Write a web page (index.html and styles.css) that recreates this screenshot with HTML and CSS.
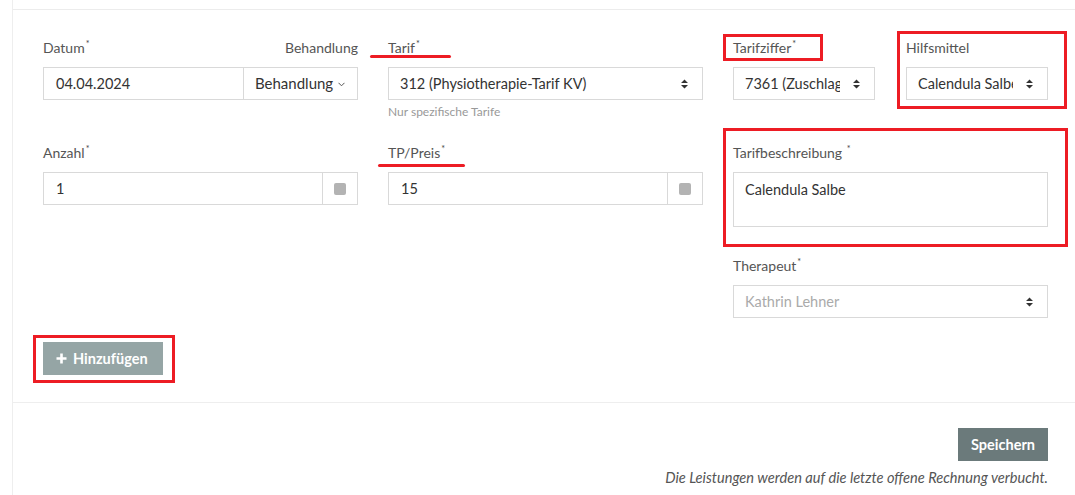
FILE: index.html
```html
<!DOCTYPE html>
<html lang="de">
<head>
<meta charset="utf-8">
<title>Leistungen</title>
<link rel="stylesheet" href="styles.css">
</head>
<body>
<div class="page">
  <div class="panel">
    <div class="sep-top"></div>
    <div class="form">
      <div class="grid">
        <div class="group">
          <div class="label-row">
            <span class="label">Datum<span class="req">*</span></span>
            <span class="label">Behandlung</span>
          </div>
          <div class="input-group">
            <div class="control grow">04.04.2024</div>
            <div class="addon-dd">Behandlung
              <svg class="chev" width="7" height="5" viewBox="0 0 7 5"><path d="M0.5 0.8 L3.5 3.8 L6.5 0.8" fill="none" stroke="#555" stroke-width="1"/></svg>
            </div>
          </div>
        </div>

        <div class="group">
          <div class="label-row"><span class="label">Tarif<span class="req">*</span></span></div>
          <div class="control select"><span class="val">312 (Physiotherapie-Tarif KV)</span>
            <svg class="sort" width="7" height="10" viewBox="0 0 7 10"><path d="M0 4 L3.5 0.5 L7 4 Z M0 6 L3.5 9.5 L7 6 Z" fill="#333"/></svg>
          </div>
          <div class="help">Nur spezifische Tarife</div>
        </div>

        <div class="group sub">
          <div>
            <div class="label-row"><span class="label">Tarifziffer<span class="req">*</span></span></div>
            <div class="control select"><span class="val">7361 (Zuschlag</span>
              <svg class="sort" width="7" height="10" viewBox="0 0 7 10"><path d="M0 4 L3.5 0.5 L7 4 Z M0 6 L3.5 9.5 L7 6 Z" fill="#333"/></svg>
            </div>
          </div>
          <div>
            <div class="label-row"><span class="label">Hilfsmittel</span></div>
            <div class="control select"><span class="val">Calendula Salbe</span>
              <svg class="sort" width="7" height="10" viewBox="0 0 7 10"><path d="M0 4 L3.5 0.5 L7 4 Z M0 6 L3.5 9.5 L7 6 Z" fill="#333"/></svg>
            </div>
          </div>
        </div>

        <div class="group">
          <div class="label-row"><span class="label">Anzahl<span class="req">*</span></span></div>
          <div class="input-group">
            <div class="control grow">1</div>
            <div class="addon-sq"><span class="sq"></span></div>
          </div>
        </div>

        <div class="group">
          <div class="label-row"><span class="label">TP/Preis<span class="req">*</span></span></div>
          <div class="input-group">
            <div class="control grow">15</div>
            <div class="addon-sq"><span class="sq"></span></div>
          </div>
        </div>

        <div class="group">
          <div class="label-row"><span class="label">Tarifbeschreibung <span class="req">*</span></span></div>
          <div class="control textarea">Calendula Salbe</div>
        </div>

        <div class="group col3">
          <div class="label-row"><span class="label">Therapeut<span class="req">*</span></span></div>
          <div class="control select placeholder"><span class="val">Kathrin Lehner</span>
            <svg class="sort" width="7" height="10" viewBox="0 0 7 10"><path d="M0 4 L3.5 0.5 L7 4 Z M0 6 L3.5 9.5 L7 6 Z" fill="#333"/></svg>
          </div>
        </div>
      </div>

      <div class="add-row">
        <button class="btn btn-add" type="button">
          <svg width="11" height="11" viewBox="0 0 11 11"><path d="M5.5 0.5 V10.5 M0.5 5.5 H10.5" stroke="#fff" stroke-width="2.6"/></svg>
          Hinzufügen
        </button>
      </div>
    </div>

    <div class="footer">
      <button class="btn btn-save" type="button">Speichern</button>
      <p class="note">Die Leistungen werden auf die letzte offene Rechnung verbucht.</p>
    </div>
  </div>

  <div class="mark box-ziffer"></div>
  <div class="mark box-hilfs"></div>
  <div class="mark box-beschr"></div>
  <div class="mark box-add"></div>
  <div class="line line-tarif"></div>
  <div class="line line-tp"></div>
</div>
</body>
</html>
```

FILE: styles.css
```css
* { box-sizing: border-box; }
html, body { margin: 0; padding: 0; background: #fff; }
body {
  font-family: Lato, "Open Sans", "Liberation Sans", sans-serif;
  color: #333;
  font-size: 14px;
}
.page { position: relative; width: 1075px; height: 495px; overflow: hidden; }
.panel {
  margin-left: 12px;
  border-left: 1px solid #eeeeee;
  height: 495px;
  padding-top: 9px;
}
.sep-top { border-top: 1px solid #ececec; }
.form { padding: 28px 27px 0 30px; }
.grid {
  display: grid;
  grid-template-columns: 315px 315px 315px;
  grid-template-rows: 105px 113px auto;
  column-gap: 30px;
  align-items: start;
}
.col3 { grid-column: 3; }
.sub {
  display: grid;
  grid-template-columns: 142px 142px;
  column-gap: 31px;
}
.label-row {
  display: flex;
  justify-content: space-between;
  height: 20px;
  line-height: 20px;
  margin-bottom: 9px;
}
.label { font-size: 14px; color: #555; }
.req { font-size: 9px; vertical-align: top; line-height: 12px; margin-left: 1px; color: #444; }
.control {
  height: 33px;
  border: 1px solid #d9d9d9;
  padding: 0 12px;
  line-height: 31px;
  font-size: 14.5px;
  color: #333;
  background: #fff;
  white-space: nowrap;
  overflow: hidden;
}
.input-group { display: flex; }
.grow { flex: 1; }
.addon-dd {
  border: 1px solid #d9d9d9;
  border-left: none;
  height: 33px;
  width: 114px;
  line-height: 31px;
  padding-left: 11px;
  font-size: 15px;
  color: #333;
  white-space: nowrap;
}
.chev { margin-left: 1px; vertical-align: 2px; }
.addon-sq {
  width: 35px;
  height: 33px;
  border: 1px solid #d9d9d9;
  border-left: none;
  display: flex;
  align-items: center;
  justify-content: center;
}
.sq { width: 12px; height: 12px; background: #b3b3b3; border-radius: 2px; }
.select {
  position: relative;
  padding-right: 34px;
  padding-left: 11px;
}
.select .val { display: block; overflow: hidden; }
.sort { position: absolute; right: 14px; top: 11px; }
.placeholder { color: #aaa; }
.help { font-size: 12px; color: #999; margin-top: 4px; line-height: 15px; }
.textarea { height: 55px; line-height: 20px; padding-top: 7px; padding-left: 11px; }

.add-row { margin-top: 24px; padding-bottom: 27px; border-bottom: 1px solid #eeeeee; margin-left: -30px; margin-right: -27px; padding-left: 30px; }
.btn {
  border: none;
  height: 33px;
  font-family: Lato, "Open Sans", "Liberation Sans", sans-serif;
  font-size: 14.5px;
  font-weight: 700;
  color: #fff;
  padding: 0 13px;
  cursor: pointer;
}
.btn-add { background: #95a5a5; width: 120px; display: flex; align-items: center; gap: 6px; }
.btn-save { background: #6b7a7b; width: 90px; padding: 0; }
.footer {
  display: flex;
  flex-direction: column;
  align-items: flex-end;
  padding: 25px 27px 0 0;
}
.note {
  margin: 8px 0 0;
  font-size: 14.6px;
  font-style: italic;
  color: #555;
  line-height: 18px;
}

.mark { position: absolute; border: 3px solid #ed1c24; }
.box-ziffer { left: 723px; top: 34px; width: 100px; height: 27px; }
.box-hilfs { left: 897px; top: 31px; width: 170px; height: 78px; }
.box-beschr { left: 723px; top: 128px; width: 345px; height: 119px; }
.box-add { left: 33px; top: 335px; width: 142px; height: 48px; }
.line { position: absolute; height: 3px; background: #ed1c24; border-radius: 2px; }
.line-tarif { left: 370px; top: 55px; width: 81px; }
.line-tp { left: 378px; top: 164px; width: 87px; }
```
